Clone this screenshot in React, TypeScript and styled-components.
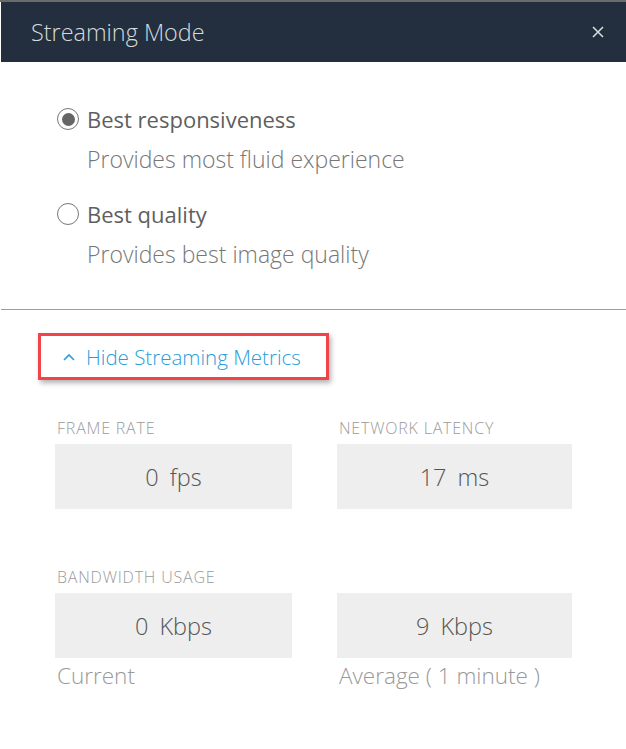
import React, { useState } from "react";
import styled, { createGlobalStyle } from "styled-components";

const GlobalStyle = createGlobalStyle`
  html, body {
    margin: 0;
    padding: 0;
    background: #fff;
  }
  body {
    font-family: "Open Sans", "Noto Sans", sans-serif;
  }
`;

const Panel = styled.div`
  width: 626px;
  min-height: 749px;
  border-top: 2px solid #6b6b6b;
  box-sizing: border-box;
  padding-left: 1px;
  background: #fff;
`;

const Header = styled.div`
  height: 60px;
  background: #232f3e;
  display: flex;
  align-items: center;
  justify-content: space-between;
  padding: 0 22px 0 30px;
  h2 {
    margin: 0;
    font-size: 23.4px;
    font-weight: 300;
    color: #d5dbdb;
  }
`;

const CloseButton = styled.button`
  background: none;
  border: none;
  padding: 0;
  color: #d5dbdb;
  cursor: pointer;
  display: flex;
`;

const Modes = styled.div`
  padding: 43px 0 40px 56px;
  display: flex;
  flex-direction: column;
  gap: 26px;
`;

const Mode = styled.label`
  display: flex;
  flex-direction: column;
  cursor: pointer;
`;

const ModeTitle = styled.div`
  display: flex;
  align-items: center;
  gap: 8px;
  font-size: 22px;
  color: #5f5f5f;
  line-height: 28px;
`;

const Radio = styled.span<{ $checked: boolean }>`
  width: 22px;
  height: 22px;
  border: 1px solid #777;
  border-radius: 50%;
  box-sizing: border-box;
  display: flex;
  align-items: center;
  justify-content: center;
  &::after {
    content: "";
    width: 13px;
    height: 13px;
    border-radius: 50%;
    background: ${(p) => (p.$checked ? "#666" : "transparent")};
  }
`;

const ModeDesc = styled.div`
  padding-left: 30px;
  margin-top: 11px;
  font-size: 23px;
  font-weight: 300;
  line-height: 30px;
  color: #777;
`;

const Divider = styled.hr`
  margin: 0;
  border: none;
  border-top: 1px solid #9e9e9e;
`;

const Metrics = styled.div`
  padding: 23px 54px 0 54px;
`;

const Toggle = styled.button`
  margin-left: -17px;
  width: fit-content;
  display: flex;
  align-items: center;
  gap: 11px;
  border: 3px solid #f0444a;
  box-shadow: 2px 3px 5px rgba(0, 0, 0, 0.3);
  background: #fff;
  padding: 7px 25px 6px 22px;
  font-family: inherit;
  font-size: 20.5px;
  font-weight: 300;
  line-height: 28px;
  color: #2a9dd8;
  cursor: pointer;
`;

const Grid = styled.div`
  margin-top: 38px;
  display: grid;
  grid-template-columns: 237px 235px;
  column-gap: 45px;
`;

const Cell = styled.div<{ $top?: number }>`
  display: flex;
  flex-direction: column;
  margin-top: ${(p) => p.$top ?? 0}px;
`;

const Label = styled.div`
  font-size: 16px;
  font-weight: 300;
  line-height: 20px;
  letter-spacing: 0.8px;
  color: #9a9a9a;
  text-transform: uppercase;
  height: 20px;
  margin-bottom: 6px;
  padding-left: 2px;
`;

const Value = styled.div`
  height: 65px;
  background: #eeeeee;
  display: flex;
  align-items: center;
  justify-content: center;
  font-size: 23.5px;
  font-weight: 300;
  color: #555;
  word-spacing: 5px;
`;

const Caption = styled.div`
  margin-top: 3px;
  padding-left: 2px;
  font-size: 22.5px;
  font-weight: 300;
  line-height: 30px;
  color: #999;
`;

const modes = [
  { id: "resp", title: "Best responsiveness", desc: "Provides most fluid experience" },
  { id: "qual", title: "Best quality", desc: "Provides best image quality" },
];

export default function App() {
  const [mode, setMode] = useState("resp");
  const [open, setOpen] = useState(true);

  return (
    <>
      <GlobalStyle />
      <Panel>
        <Header>
          <h2>Streaming Mode</h2>
          <CloseButton aria-label="close">
            <svg width="12" height="12" viewBox="0 0 12 12">
              <path d="M1 1L11 11M11 1L1 11" stroke="currentColor" strokeWidth="1.6" />
            </svg>
          </CloseButton>
        </Header>
        <Modes>
          {modes.map((m) => (
            <Mode key={m.id} onClick={() => setMode(m.id)}>
              <ModeTitle>
                <Radio $checked={mode === m.id} />
                {m.title}
              </ModeTitle>
              <ModeDesc>{m.desc}</ModeDesc>
            </Mode>
          ))}
        </Modes>
        <Divider />
        <Metrics>
          <Toggle onClick={() => setOpen(!open)}>
            <svg width="12" height="8" viewBox="0 0 12 8">
              <path d="M1 7L6 2L11 7" fill="none" stroke="currentColor" strokeWidth="1.6" />
            </svg>
            {open ? "Hide" : "Show"} Streaming Metrics
          </Toggle>
          {open && (
            <Grid>
              <Cell>
                <Label>Frame rate</Label>
                <Value>0 fps</Value>
              </Cell>
              <Cell>
                <Label>Network latency</Label>
                <Value>17 ms</Value>
              </Cell>
              <Cell $top={58}>
                <Label>Bandwidth usage</Label>
                <Value>0 Kbps</Value>
                <Caption>Current</Caption>
              </Cell>
              <Cell $top={58}>
                <Label />
                <Value>9 Kbps</Value>
                <Caption>Average ( 1 minute )</Caption>
              </Cell>
            </Grid>
          )}
        </Metrics>
      </Panel>
    </>
  );
}
